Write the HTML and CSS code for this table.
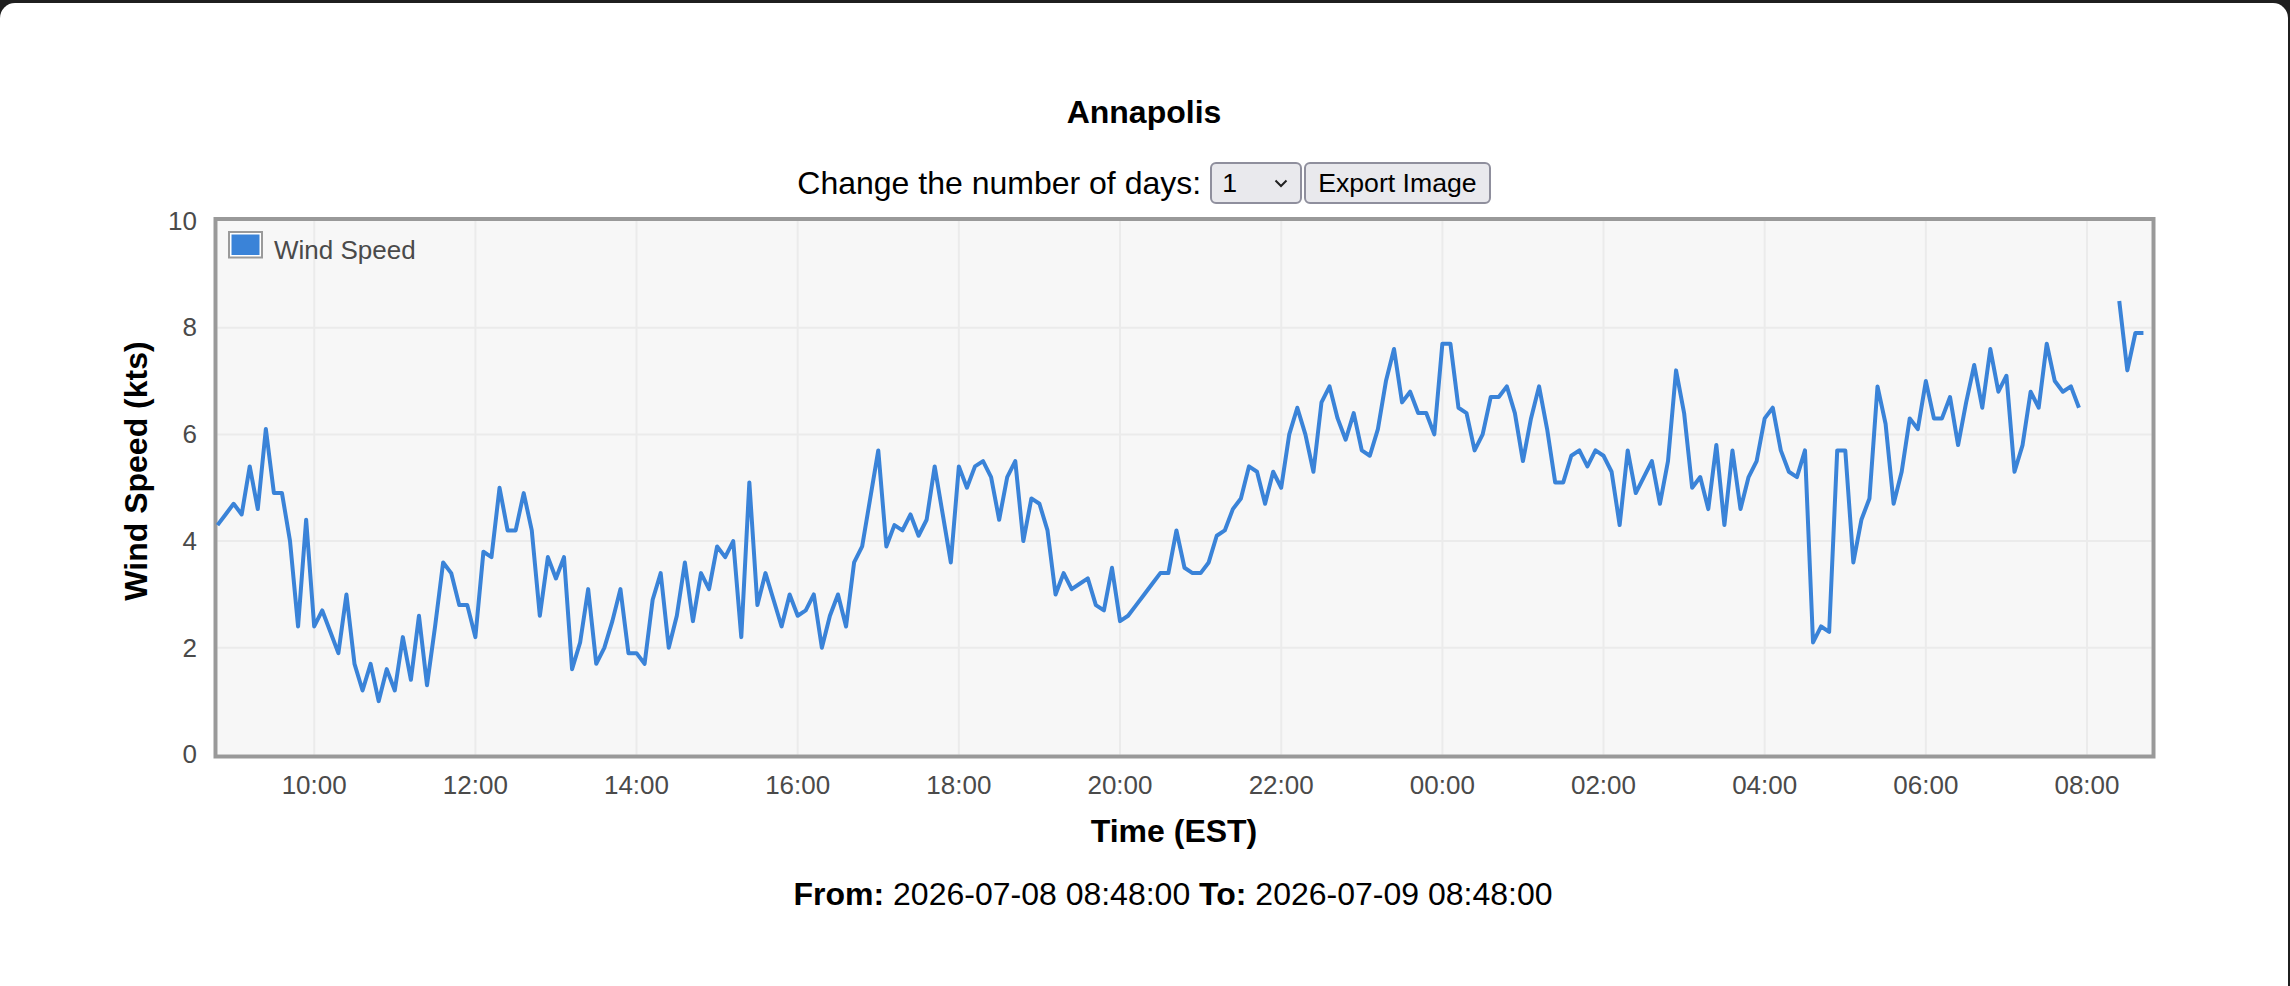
FILE: index.html
```html
<!DOCTYPE html>
<html lang="en">
<head>
<meta charset="utf-8">
<title>Annapolis</title>
<link rel="stylesheet" href="styles.css">
</head>
<body>
<div class="window">
  <h4 class="title">Annapolis</h4>
  <div class="controls">
    <span class="label">Change the number of days:</span>
    <span class="select-wrap">
      <select class="days"><option>1</option><option>2</option><option>3</option><option>7</option></select>
      <svg class="chevron" width="14" height="9" viewBox="0 0 14 9"><path d="M1.5 1.5 L7 7 L12.5 1.5" fill="none" stroke="#222" stroke-width="2"/></svg>
    </span>
    <button class="export" type="button">Export Image</button>
  </div>
  <svg class="chart" width="2288" height="670" viewBox="0 204 2288 670">
    <rect class="plot-bg" x="217.5" y="221" width="1934" height="533.5"/>
    <g class="grid">
      <line x1="314.2" y1="221" x2="314.2" y2="754.5"/>
      <line x1="475.4" y1="221" x2="475.4" y2="754.5"/>
      <line x1="636.5" y1="221" x2="636.5" y2="754.5"/>
      <line x1="797.7" y1="221" x2="797.7" y2="754.5"/>
      <line x1="958.9" y1="221" x2="958.9" y2="754.5"/>
      <line x1="1120.0" y1="221" x2="1120.0" y2="754.5"/>
      <line x1="1281.2" y1="221" x2="1281.2" y2="754.5"/>
      <line x1="1442.4" y1="221" x2="1442.4" y2="754.5"/>
      <line x1="1603.5" y1="221" x2="1603.5" y2="754.5"/>
      <line x1="1764.7" y1="221" x2="1764.7" y2="754.5"/>
      <line x1="1925.9" y1="221" x2="1925.9" y2="754.5"/>
      <line x1="2087.0" y1="221" x2="2087.0" y2="754.5"/>
      <line x1="217.5" y1="647.8" x2="2151.5" y2="647.8"/>
      <line x1="217.5" y1="541.1" x2="2151.5" y2="541.1"/>
      <line x1="217.5" y1="434.4" x2="2151.5" y2="434.4"/>
      <line x1="217.5" y1="327.7" x2="2151.5" y2="327.7"/>
    </g>
    <rect class="plot-border" x="215.5" y="219" width="1938" height="537.5"/>
    <g transform="translate(217.5 754.5) scale(8.0583 -53.35)">
      <polyline class="series" points="0,4.3 1,4.5 2,4.7 3,4.5 4,5.4 5,4.6 6,6.1 7,4.9 8,4.9 9,4.0 10,2.4 11,4.4 12,2.4 13,2.7 14,2.3 15,1.9 16,3.0 17,1.7 18,1.2 19,1.7 20,1.0 21,1.6 22,1.2 23,2.2 24,1.4 25,2.6 26,1.3 27,2.4 28,3.6 29,3.4 30,2.8 31,2.8 32,2.2 33,3.8 34,3.7 35,5.0 36,4.2 37,4.2 38,4.9 39,4.2 40,2.6 41,3.7 42,3.3 43,3.7 44,1.6 45,2.1 46,3.1 47,1.7 48,2.0 49,2.5 50,3.1 51,1.9 52,1.9 53,1.7 54,2.9 55,3.4 56,2.0 57,2.6 58,3.6 59,2.5 60,3.4 61,3.1 62,3.9 63,3.7 64,4.0 65,2.2 66,5.1 67,2.8 68,3.4 69,2.9 70,2.4 71,3.0 72,2.6 73,2.7 74,3.0 75,2.0 76,2.6 77,3.0 78,2.4 79,3.6 80,3.9 81,4.8 82,5.7 83,3.9 84,4.3 85,4.2 86,4.5 87,4.1 88,4.4 89,5.4 90,4.5 91,3.6 92,5.4 93,5.0 94,5.4 95,5.5 96,5.2 97,4.4 98,5.2 99,5.5 100,4.0 101,4.8 102,4.7 103,4.2 104,3.0 105,3.4 106,3.1 107,3.2 108,3.3 109,2.8 110,2.7 111,3.5 112,2.5 113,2.6 114,2.8 115,3.0 116,3.2 117,3.4 118,3.4 119,4.2 120,3.5 121,3.4 122,3.4 123,3.6 124,4.1 125,4.2 126,4.6 127,4.8 128,5.4 129,5.3 130,4.7 131,5.3 132,5.0 133,6.0 134,6.5 135,6.0 136,5.3 137,6.6 138,6.9 139,6.3 140,5.9 141,6.4 142,5.7 143,5.6 144,6.1 145,7.0 146,7.6 147,6.6 148,6.8 149,6.4 150,6.4 151,6.0 152,7.7 153,7.7 154,6.5 155,6.4 156,5.7 157,6.0 158,6.7 159,6.7 160,6.9 161,6.4 162,5.5 163,6.3 164,6.9 165,6.1 166,5.1 167,5.1 168,5.6 169,5.7 170,5.4 171,5.7 172,5.6 173,5.3 174,4.3 175,5.7 176,4.9 177,5.2 178,5.5 179,4.7 180,5.5 181,7.2 182,6.4 183,5.0 184,5.2 185,4.6 186,5.8 187,4.3 188,5.7 189,4.6 190,5.2 191,5.5 192,6.3 193,6.5 194,5.7 195,5.3 196,5.2 197,5.7 198,2.1 199,2.4 200,2.3 201,5.7 202,5.7 203,3.6 204,4.4 205,4.8 206,6.9 207,6.2 208,4.7 209,5.3 210,6.3 211,6.1 212,7.0 213,6.3 214,6.3 215,6.7 216,5.8 217,6.6 218,7.3 219,6.5 220,7.6 221,6.8 222,7.1 223,5.3 224,5.8 225,6.8 226,6.5 227,7.7 228,7.0 229,6.8 230,6.9 231,6.5"/>
      <polyline class="series" points="236,8.5 237,7.2 238,7.9 239,7.9"/>
    </g>
    <g class="legend">
      <rect class="swatch-frame" x="229" y="232" width="33" height="25.5"/>
      <rect class="swatch" x="231.5" y="234.5" width="28" height="20.5"/>
      <text class="legend-text" x="274" y="259">Wind Speed</text>
    </g>
    <g class="yticks">
      <text x="197" y="229.7">10</text>
      <text x="197" y="336.4">8</text>
      <text x="197" y="443.1">6</text>
      <text x="197" y="549.8">4</text>
      <text x="197" y="656.5">2</text>
      <text x="197" y="763.2">0</text>
    </g>
    <g class="xticks">
      <text x="314.2" y="794">10:00</text>
      <text x="475.4" y="794">12:00</text>
      <text x="636.5" y="794">14:00</text>
      <text x="797.7" y="794">16:00</text>
      <text x="958.9" y="794">18:00</text>
      <text x="1120.0" y="794">20:00</text>
      <text x="1281.2" y="794">22:00</text>
      <text x="1442.4" y="794">00:00</text>
      <text x="1603.5" y="794">02:00</text>
      <text x="1764.7" y="794">04:00</text>
      <text x="1925.9" y="794">06:00</text>
      <text x="2087.0" y="794">08:00</text>
    </g>
    <text class="axis-title" transform="translate(135 471) rotate(-90)" y="11.5">Wind Speed (kts)</text>
    <text class="axis-title" x="1174" y="842">Time (EST)</text>
  </svg>
  <p class="range"><b>From:</b> 2026-07-08 08:48:00 <b>To:</b> 2026-07-09 08:48:00</p>
</div>
</body>
</html>
```

FILE: styles.css
```css
html, body {
  margin: 0;
  padding: 0;
}

body {
  background: #1f1f1f;
  font-family: "Liberation Sans", Arial, Helvetica, sans-serif;
  color: #000;
}

.window {
  margin: 3px 2px 0 0;
  height: 983px;
  background: #fff;
  border-radius: 15px 15px 0 0;
  overflow: hidden;
}

.title {
  margin: 0;
  padding-top: 89px;
  font-size: 32px;
  line-height: 40px;
  font-weight: bold;
  text-align: center;
}

.controls {
  margin-top: 30px;
  height: 42px;
  display: flex;
  justify-content: center;
  align-items: center;
  font-size: 32px;
}

.label {
  margin-right: 9px;
  line-height: 42px;
}

.select-wrap {
  position: relative;
  display: inline-block;
  height: 42px;
}

.days {
  appearance: none;
  -webkit-appearance: none;
  box-sizing: border-box;
  width: 92px;
  height: 42px;
  margin: 0;
  padding: 0 0 0 10px;
  border: 2px solid #8f8f9d;
  border-radius: 6px;
  background: #e9e9ed;
  color: #000;
  font-family: "Liberation Sans", Arial, sans-serif;
  font-size: 26.67px;
  outline: none;
}

.chevron {
  position: absolute;
  right: 14px;
  top: 17px;
  pointer-events: none;
}

.export {
  box-sizing: border-box;
  height: 42px;
  margin: 0 0 0 2px;
  padding: 0 12px;
  border: 2px solid #8f8f9d;
  border-radius: 6px;
  background: #e9e9ed;
  color: #000;
  font-family: "Liberation Sans", Arial, sans-serif;
  font-size: 26.67px;
}

.chart {
  display: block;
}

.plot-bg {
  fill: #f7f7f7;
}

.grid line {
  stroke: #ebebeb;
  stroke-width: 2;
}

.plot-border {
  fill: none;
  stroke: #999;
  stroke-width: 4;
}

.series {
  fill: none;
  stroke: #3a83d8;
  stroke-width: 4;
  stroke-linejoin: round;
  stroke-linecap: butt;
  vector-effect: non-scaling-stroke;
}

.swatch-frame {
  fill: #fff;
  stroke: #9a9a9a;
  stroke-width: 2;
}

.swatch {
  fill: #3a83d8;
}

.legend-text {
  font-family: "Liberation Sans", Arial, sans-serif;
  font-size: 26px;
  fill: #4a4a4a;
}

.yticks text {
  font-family: "Liberation Sans", Arial, sans-serif;
  font-size: 26px;
  fill: #4a4a4a;
  text-anchor: end;
}

.xticks text {
  font-family: "Liberation Sans", Arial, sans-serif;
  font-size: 26px;
  fill: #4a4a4a;
  text-anchor: middle;
}

.axis-title {
  font-family: "Liberation Sans", Arial, sans-serif;
  font-size: 32px;
  font-weight: bold;
  fill: #000;
  text-anchor: middle;
}

.range {
  margin: 0;
  padding-left: 58px;
  font-size: 32px;
  line-height: 40px;
  text-align: center;
}
```
